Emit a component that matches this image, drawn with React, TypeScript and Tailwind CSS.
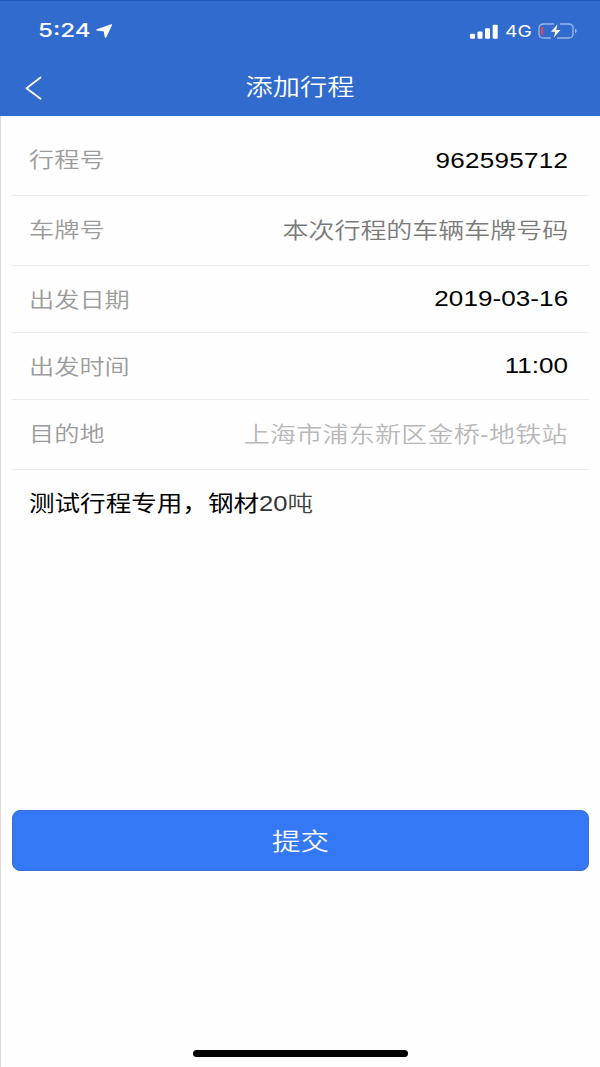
import React from "react";

type Tone = "value" | "hint" | "faint";

interface Field {
  label: string;
  value: string;
  tone: Tone;
  row: string;
  labelShift: string;
  valueShift: string;
}

const tones: Record<Tone, string> = {
  value: "text-black",
  hint: "text-[#7b7b7b]",
  faint: "text-[#b8b8b8] tracking-[0.22px]",
};

const fields: Field[] = [
  { label: "行程号", value: "962595712", tone: "value", row: "h-[80px]", labelShift: "pt-[8px]", valueShift: "pt-[10px] tracking-[0.25px]" },
  { label: "车牌号", value: "本次行程的车辆车牌号码", tone: "hint", row: "h-[70px]", labelShift: "pb-[2px]", valueShift: "pt-[1px]" },
  { label: "出发日期", value: "2019-03-16", tone: "value", row: "h-[67px]", labelShift: "pt-[2px]", valueShift: "pt-0 tracking-[0.08px]" },
  { label: "出发时间", value: "11:00", tone: "value", row: "h-[67px]", labelShift: "pt-[2px]", valueShift: "pt-0" },
  { label: "目的地", value: "上海市浦东新区金桥-地铁站", tone: "faint", row: "h-[70px]", labelShift: "pb-[2px]", valueShift: "pt-[1px]" },
];

function StatusBar() {
  return (
    <div className="flex h-[60px] items-center justify-between pl-[38px] pr-[22px]">
      <div className="flex items-center">
        <span className="w-[58px]">
          <span className="inline-block origin-left scale-x-[1.27] font-[Inter] text-[19px] font-medium leading-6">5:24</span>
        </span>
        <svg width="17" height="14" viewBox="0 0 17 14" fill="white" stroke="white" strokeWidth="1.4" strokeLinejoin="round">
          <path d="M15.4 .9 1 5.900l7.300 1 1.200 6.200z" />
        </svg>
      </div>
      <div className="flex items-center">
        <svg width="28" height="15" viewBox="0 0 28 15" fill="white">
          <rect x="0" y="9.8" width="5" height="5" rx="1" />
          <rect x="7.5" y="7.5" width="5" height="7.3" rx="1" />
          <rect x="15" y="4.2" width="5" height="10.6" rx="1" />
          <rect x="22.7" y=".8" width="5" height="14" rx="1" />
        </svg>
        <span className="ml-[7px] w-[33px]">
          <span className="inline-block origin-left scale-x-[1.2] font-[Inter] text-[16px] font-normal leading-6">4G</span>
        </span>
        <svg width="40" height="16" viewBox="0 0 40 16" fill="none">
          <path d="M16 1H5.5C3 1 1 2.5 1 5v6c0 2.500 2 4 4.500 4H13M22 1h8.500C33 1 35 2.500 35 5v6c0 2.500-2 4-4.500 4H19" stroke="white" strokeOpacity=".5" strokeWidth="1.300" />
          <rect x="2.800" y="3.500" width="2.400" height="9" rx="1" fill="#d8475f" />
          <path d="M19.500 1.300 13 8.800h4.200L15.700 14.700 22.500 6.900h-4.300z" fill="white" />
          <path d="M37 5.500c2.200.7 2.200 4.300 0 5z" fill="white" fillOpacity=".5" />
        </svg>
      </div>
    </div>
  );
}

function FieldRow({ field }: { field: Field }) {
  return (
    <div className={`flex items-center justify-between border-b border-[#ececec] pl-[17px] pr-[21px] ${field.row}`}>
      <div className={field.labelShift}>
        <span className="block origin-left scale-x-[1.2] whitespace-nowrap text-[21px] leading-7 text-[#9c9c9c]">{field.label}</span>
      </div>
      <div className={field.valueShift}>
        <span className={`block origin-right scale-x-[1.215] whitespace-nowrap text-[21.4px] leading-7 ${tones[field.tone]}`}>
          {field.value}
        </span>
      </div>
    </div>
  );
}

export default function App() {
  return (
    <div className="flex h-[1067px] w-[600px] flex-col overflow-hidden bg-[#fefefe] font-['Liberation_Sans','Noto_Sans_CJK_SC',sans-serif] font-[350]">
      <header className="h-[116px] shrink-0 border-t border-[#2059b8] bg-[#306bcd] text-white">
        <StatusBar />
        <div className="grid h-[54px] grid-cols-[60px_1fr_60px] items-center">
          <svg className="ml-[25px]" width="18" height="24" viewBox="0 0 18 24" fill="none" stroke="white" strokeWidth="1.800" strokeLinecap="round" strokeLinejoin="round">
            <path d="M15.500 1.500 1.500 12.200 15.500 22.800" />
          </svg>
          <h1 className="scale-x-[1.215] text-center text-[22.400px] font-[350] leading-8">添加行程</h1>
        </div>
      </header>
      <main className="flex flex-1 flex-col border-l border-[#dadada] pl-[11px] pr-[11px]">
        {fields.map((field) => (
          <FieldRow key={field.label} field={field} />
        ))}
        <div className="h-[340px] pl-[17px] pt-[20px]">
          <p className="w-fit origin-left scale-x-[1.195] whitespace-nowrap text-[21.4px] font-normal leading-7 text-black">
            测试行程专用，钢材<span className="text-[#333]">20</span>
            <span className="font-[350] text-[#444]">吨</span>
          </p>
        </div>
        <button className="flex h-[61px] w-[577px] items-center justify-center rounded-[8px] border border-[#3a70d4] bg-[#3478f6] pt-[3px] text-white">
          <span className="scale-x-[1.215] text-[23.500px] font-[350] leading-8">提交</span>
        </button>
        <div className="mt-auto flex justify-center pb-[10px]">
          <div className="h-[7px] w-[215px] rounded-full bg-black" />
        </div>
      </main>
    </div>
  );
}
